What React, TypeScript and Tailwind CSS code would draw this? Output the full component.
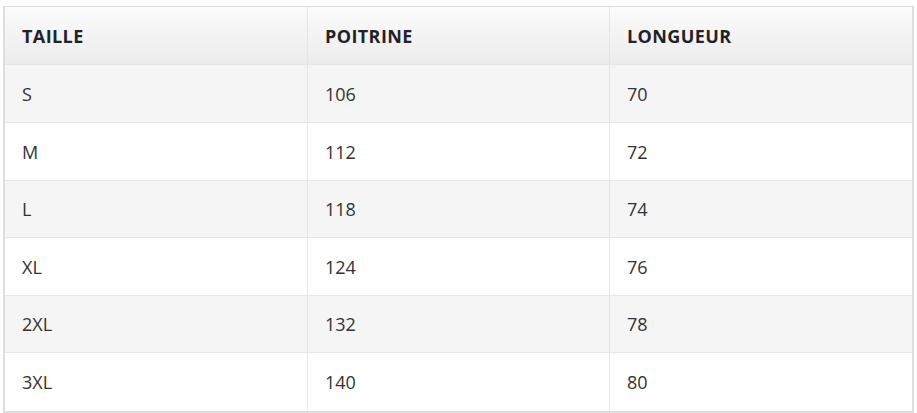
import React from "react";

const rows = [
  ["S", "106", "70"],
  ["M", "112", "72"],
  ["L", "118", "74"],
  ["XL", "124", "76"],
  ["2XL", "132", "78"],
  ["3XL", "140", "80"],
];
const heights = ["h-[58px]", "h-[58px]", "h-[57px]", "h-[58px]", "h-[57px]", "h-[58px]"];

export default function App() {
  return (
    <div className="w-[917px] h-[413px] bg-white pt-[6px] pl-[3px]" style={{ fontFamily: '"Open Sans", sans-serif' }}>
      <div className="w-[911px] border-2 border-[#dedede] border-t-[1.5px]">
        <div className="grid grid-cols-[302px_302px_1fr] h-[58px] border-b border-[#e6e6e6] bg-gradient-to-b from-[#fbfbfb] to-[#ececec]">
          {["TAILLE", "POITRINE", "LONGUEUR"].map((h, i) => (
            <div key={h} className={`flex items-center pl-[17px] pt-[2px] text-[18px] tracking-[0.4px] font-bold text-[#1f2328] ${i > 0 ? "border-l border-[#e6e6e6]" : ""}`}>
              {h}
            </div>
          ))}
        </div>
        {rows.map((r, ri) => (
          <div
            key={r[0]}
            className={`grid grid-cols-[302px_302px_1fr] ${heights[ri]} ${ri < rows.length - 1 ? "border-b border-[#e6e6e6]" : ""} ${ri % 2 === 0 ? "bg-[#f5f5f5]" : "bg-white"}`}
          >
            {r.map((c, i) => (
              <div key={i} className={`flex items-center pl-[17px] pt-[1px] text-[18px] text-[#333] ${i > 0 ? "border-l border-[#e6e6e6]" : ""}`}>
                {c}
              </div>
            ))}
          </div>
        ))}
      </div>
    </div>
  );
}
